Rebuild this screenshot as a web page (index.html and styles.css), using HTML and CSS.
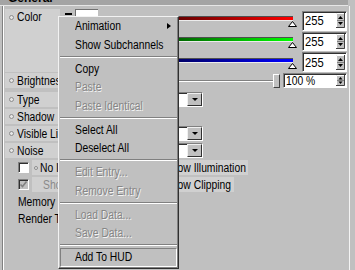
FILE: index.html
```html
<!DOCTYPE html>
<html>
<head>
<meta charset="utf-8">
<link rel="stylesheet" href="styles.css">
</head>
<body>
<div class="panel">
  <div class="head"><span class="head-t">General</span></div>
  <div class="group">
    <div class="color-block">
      <div class="lbl lbl-color"><span class="dot"></span><span class="t">Color</span></div>
      <div class="swatch"><span class="dash"></span><span class="swbox"></span></div>
      <div class="sliders">
        <div class="slide"><div class="bar bar-r"></div><svg class="tri" width="9" height="6" viewBox="0 0 9 6"><polygon points="4.5,0.5 8.5,5.5 0.5,5.5" fill="#fff" stroke="#000" stroke-width="1"/></svg></div>
        <div class="slide"><div class="bar bar-g"></div><svg class="tri" width="9" height="6" viewBox="0 0 9 6"><polygon points="4.5,0.5 8.5,5.5 0.5,5.5" fill="#fff" stroke="#000" stroke-width="1"/></svg></div>
        <div class="slide"><div class="bar bar-b"></div><svg class="tri" width="9" height="6" viewBox="0 0 9 6"><polygon points="4.5,0.5 8.5,5.5 0.5,5.5" fill="#fff" stroke="#000" stroke-width="1"/></svg></div>
      </div>
      <div class="fields">
        <div class="num"><span class="t num-t">255</span><svg class="spin" width="9" height="15" viewBox="0 0 9 15"><rect width="9" height="15" fill="#c0c0c0"/><path d="M0.5 14.5V0.5H8.5" fill="none" stroke="#fff"/><path d="M8.5 0V14.5H0" fill="none" stroke="#404040"/><path d="M1 7.5H8" stroke="#808080"/><polygon points="2,6 4.5,3 7,6" fill="#000"/><polygon points="2,9 7,9 4.5,12" fill="#000"/></svg></div>
        <div class="num"><span class="t num-t">255</span><svg class="spin" width="9" height="15" viewBox="0 0 9 15"><rect width="9" height="15" fill="#c0c0c0"/><path d="M0.5 14.5V0.5H8.5" fill="none" stroke="#fff"/><path d="M8.5 0V14.5H0" fill="none" stroke="#404040"/><path d="M1 7.5H8" stroke="#808080"/><polygon points="2,6 4.5,3 7,6" fill="#000"/><polygon points="2,9 7,9 4.5,12" fill="#000"/></svg></div>
        <div class="num"><span class="t num-t">255</span><svg class="spin" width="9" height="15" viewBox="0 0 9 15"><rect width="9" height="15" fill="#c0c0c0"/><path d="M0.5 14.5V0.5H8.5" fill="none" stroke="#fff"/><path d="M8.5 0V14.5H0" fill="none" stroke="#404040"/><path d="M1 7.5H8" stroke="#808080"/><polygon points="2,6 4.5,3 7,6" fill="#000"/><polygon points="2,9 7,9 4.5,12" fill="#000"/></svg></div>
      </div>
    </div>

    <div class="row row-bright">
      <div class="lbl lbl-b"><span class="dot"></span><span class="t">Brightness</span></div>
      <div class="track"></div>
      <div class="knob"></div>
      <div class="num num-sm"><span class="t num-t">100 %</span><svg class="spin" width="9" height="11" viewBox="0 0 9 11"><rect width="9" height="11" fill="#c0c0c0"/><path d="M0.5 10.5V0.5H8.5" fill="none" stroke="#fff"/><path d="M8.5 0V10.5H0" fill="none" stroke="#404040"/><path d="M1 5.5H8" stroke="#808080"/><polygon points="2.5,4.5 4.5,2 6.5,4.5" fill="#000"/><polygon points="2.5,6.5 6.5,6.5 4.5,9" fill="#000"/></svg></div>
    </div>

    <div class="row row-first">
      <div class="lbl lbl-w"><span class="dot"></span><span class="t">Type</span></div>
      <div class="combo"><span class="combo-btn"><span class="arrow-down"></span></span></div>
    </div>
    <div class="row">
      <div class="lbl lbl-w"><span class="dot"></span><span class="t">Shadow</span></div>
    </div>
    <div class="row">
      <div class="lbl lbl-w"><span class="dot"></span><span class="t">Visible Light</span></div>
      <div class="combo"><span class="combo-btn"><span class="arrow-down"></span></span></div>
    </div>
    <div class="row">
      <div class="lbl lbl-w"><span class="dot"></span><span class="t">Noise</span></div>
      <div class="combo"><span class="combo-btn"><span class="arrow-down"></span></span></div>
    </div>

    <div class="row">
      <span class="cb"></span>
      <div class="lbl lbl-c"><span class="dot dot-s"></span><span class="t">No Illumination</span></div>
      <span class="cb cb-r"></span>
      <div class="lbl lbl-r lbl-r1"><span class="t">Show Illumination</span></div>
    </div>
    <div class="row">
      <span class="cb cb-dis"><svg width="9" height="9" viewBox="0 0 9 9"><polyline points="1.5,4.5 3.5,6.5 7.5,1.5" fill="none" stroke="#808080" stroke-width="1.6"/></svg></span>
      <div class="lbl lbl-c lbl-dis"><span class="t">Show Light</span></div>
      <span class="cb cb-r"></span>
      <div class="lbl lbl-r lbl-r2"><span class="t">Show Clipping</span></div>
    </div>
    <div class="row plain"><span class="t">Memory</span></div>
    <div class="row plain"><span class="t">Render Time</span></div>
  </div>

  <div class="menu">
    <div class="mi"><span class="t">Animation</span><span class="sub-arrow"></span></div>
    <div class="mi"><span class="t">Show Subchannels</span></div>
    <div class="sep"><span></span></div>
    <div class="mi"><span class="t">Copy</span></div>
    <div class="mi dis"><span class="t">Paste</span></div>
    <div class="mi dis"><span class="t">Paste Identical</span></div>
    <div class="sep"><span></span></div>
    <div class="mi"><span class="t">Select All</span></div>
    <div class="mi"><span class="t">Deselect All</span></div>
    <div class="sep"><span></span></div>
    <div class="mi dis"><span class="t">Edit Entry...</span></div>
    <div class="mi dis"><span class="t">Remove Entry</span></div>
    <div class="sep"><span></span></div>
    <div class="mi dis"><span class="t">Load Data...</span></div>
    <div class="mi dis"><span class="t">Save Data...</span></div>
    <div class="sep"><span></span></div>
    <div class="mi hi"><span class="t">Add To HUD</span></div>
  </div>
</div>
</body>
</html>
```

FILE: styles.css
```css
html, body {
  margin: 0;
  padding: 0;
  background: #c0c0c0;
}
body {
  font-family: "Liberation Sans", Arial, sans-serif;
  font-size: 12px;
  color: #000;
}
.panel {
  position: relative;
  width: 355px;
  height: 270px;
  overflow: hidden;
  background: #c0c0c0;
}
.t {
  display: inline-block;
  transform: scaleX(0.86);
  transform-origin: 0 50%;
  white-space: nowrap;
}
.head {
  width: 348px;
  height: 14px;
  margin-top: -8px;
  box-sizing: border-box;
  background: #a4a4a4;
  border-bottom: 1px solid #e6e6e6;
  padding-left: 8px;
  line-height: 13px;
}
.head-t {
  font-weight: bold;
}
.group {
  width: 348px;
  height: 264px;
  margin-left: 2px;
  box-sizing: border-box;
  border-left: 1px solid #808080;
  border-right: 1px solid #f4f4f4;
  box-shadow: inset 1px 0 #fff;
  padding: 3px 0 0 2px;
}
.lbl {
  display: flex;
  align-items: center;
  gap: 3px;
  background: #d0d0d0;
  box-sizing: border-box;
  padding-left: 4px;
  white-space: nowrap;
  overflow: hidden;
}
.dot {
  flex: none;
  width: 3px;
  height: 3px;
  border: 1px solid #8c8c8c;
  border-radius: 50%;
  background: #e6e6e6;
}
.color-block {
  display: flex;
  height: 63px;
}
.lbl-color {
  width: 55px;
  height: 63px;
  align-items: flex-start;
  line-height: 16px;
}
.lbl-color .dot {
  margin-top: 6px;
}
.swatch {
  display: flex;
  align-items: flex-start;
  gap: 3px;
  margin-left: 5px;
}
.dash {
  width: 7px;
  height: 2px;
  margin-top: 4px;
  background: #000;
}
.swbox {
  width: 23px;
  height: 16px;
  box-sizing: border-box;
  background: #fff;
  border-top: 1px solid #707070;
  border-left: 1px solid #707070;
}
.sliders {
  width: 198px;
  margin-left: 2px;
  display: flex;
  flex-direction: column;
}
.slide {
  height: 21px;
  display: flex;
  flex-direction: column;
  align-items: flex-end;
}
.bar {
  margin-top: 7px;
  margin-right: 5px;
  width: 193px;
  height: 3px;
  border-top: 1px solid #505050;
  border-bottom: 1px solid #ececec;
}
.bar-r { background: linear-gradient(to right, #000, #ff0000); }
.bar-g { background: linear-gradient(to right, #000, #00ff00); }
.bar-b { background: linear-gradient(to right, #000, #0000ff); }
.tri {
  display: block;
  margin-right: 1px;
}
.fields {
  width: 45px;
  margin-left: 4px;
  padding-top: 2px;
  display: flex;
  flex-direction: column;
  gap: 1px;
}
.num {
  display: flex;
  align-items: center;
  height: 20px;
  box-sizing: border-box;
  background: #fff;
  border-top: 1px solid #808080;
  border-left: 1px solid #808080;
  border-right: 1px solid #fff;
  border-bottom: 1px solid #fff;
  box-shadow: inset 1px 1px #303030;
  padding-left: 2px;
}
.num-t {
  font-size: 13px;
}
.spin {
  display: block;
  margin-left: auto;
  margin-right: 1px;
}
.row {
  display: flex;
  align-items: center;
  height: 15px;
  margin-top: 2px;
}
.row > .lbl {
  height: 15px;
}
.row-bright {
  margin-top: 1px;
}
.lbl-b {
  width: 95px;
}
.track {
  width: 173px;
  height: 0;
  border-top: 1px solid #808080;
  border-bottom: 1px solid #fff;
}
.knob {
  width: 7px;
  height: 14px;
  box-sizing: border-box;
  background: #c0c0c0;
  border: 1px solid;
  border-color: #fff #404040 #404040 #fff;
  align-self: flex-end;
}
.num-sm {
  width: 64px;
  height: 15px;
  margin-left: 3px;
}
.num-sm .num-t {
  font-size: 12px;
}
.row-first {
  margin-top: 4px;
}
.lbl-w {
  width: 140px;
}
.combo {
  display: flex;
  width: 55px;
  height: 15px;
  margin-left: 3px;
  box-sizing: border-box;
  background: #fff;
  border-top: 1px solid #808080;
  border-left: 1px solid #808080;
  border-bottom: 1px solid #fff;
  border-right: 1px solid #fff;
  box-shadow: inset 1px 1px #303030;
}
.combo-btn {
  margin-left: auto;
  width: 15px;
  height: 13px;
  box-sizing: border-box;
  background: #c0c0c0;
  border: 1px solid;
  border-color: #f0f0f0 #303030 #303030 #f0f0f0;
  display: flex;
  align-items: center;
  justify-content: center;
}
.arrow-down {
  width: 0;
  height: 0;
  border-top: 3px solid #000;
  border-left: 3px solid transparent;
  border-right: 3px solid transparent;
}
.cb {
  flex: none;
  width: 11px;
  height: 11px;
  margin-left: 13px;
  box-sizing: border-box;
  background: #fff;
  border-top: 1px solid #808080;
  border-left: 1px solid #808080;
  border-bottom: 1px solid #fff;
  border-right: 1px solid #fff;
  box-shadow: inset 1px 1px #303030;
  display: flex;
  align-items: center;
  justify-content: center;
}
.cb-dis {
  background: #c0c0c0;
}
.cb-dis svg {
  display: block;
}
.lbl-c {
  width: 103px;
  margin-left: 3px;
  padding-left: 2px;
  gap: 2px;
}
.dot-s {
  width: 2px;
  height: 2px;
}
.lbl-dis {
  padding-left: 11px;
  color: #8a8a8a;
}
.cb-r {
  margin-left: 10px;
}
.lbl-r {
  margin-left: 4px;
  padding-left: 5px;
}
.lbl-r1 { width: 88px; }
.lbl-r2 { width: 74px; }
.plain {
  padding-left: 13px;
}
.menu {
  position: absolute;
  left: 58px;
  top: 16px;
  width: 121px;
  height: 253px;
  box-sizing: border-box;
  background: #c0c0c0;
  border: 1px solid;
  border-color: #f2f2f2 #303030 #303030 #f2f2f2;
  box-shadow: inset -1px -1px #808080;
}
.mi {
  display: flex;
  align-items: center;
  height: 18.7px;
  padding-left: 16px;
}
.mi.dis {
  color: #868686;
  text-shadow: 1px 1px 0 #f4f4f4;
}
.sub-arrow {
  margin-left: auto;
  margin-right: 7px;
  width: 0;
  height: 0;
  border-left: 4px solid #000;
  border-top: 3px solid transparent;
  border-bottom: 3px solid transparent;
}
.sep {
  display: flex;
  align-items: center;
  height: 5px;
  margin: 0 1px;
}
.sep span {
  flex: 1;
  height: 0;
  border-top: 1px solid #808080;
  border-bottom: 1px solid #fff;
}
.mi.hi {
  height: 19px;
  margin: 0 1px;
  padding-left: 14px;
  box-sizing: border-box;
  border: 1px solid;
  border-color: #808080 #fff #fff #808080;
}
```
